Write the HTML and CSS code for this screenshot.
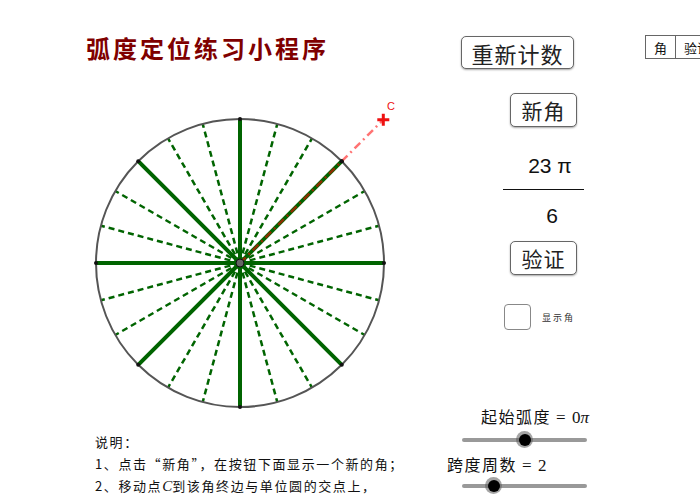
FILE: index.html
```html
<!DOCTYPE html>
<html lang="zh-CN">
  <head>
    <meta charset="UTF-8" />
    <title>弧度定位练习小程序</title>
    <link rel="stylesheet" href="styles.css">
  </head>
  <body>
    <div class="app">
      <!-- left: title, unit circle, notes -->
      <div class="left">
        <h1 class="title">弧度定位练习小程序</h1>

        <svg class="board" width="330" height="350" viewBox="0 0 330 350">
          <g id="spokes"></g>
          <circle cx="160" cy="199" r="144" fill="none" stroke="#555" stroke-width="2" />
          <g id="dots"></g>
          <line x1="160" y1="199" x2="303.3" y2="55.7" stroke="#ff0000" stroke-opacity="0.55" stroke-width="2.5" stroke-dasharray="8 4 2 4" />
          <circle cx="261.8" cy="97.2" r="2" fill="#111" />
          <circle cx="160" cy="199" r="4" fill="#666" stroke="#111" stroke-width="1" />
          <path d="M297.3 55.7 H309.3 M303.3 49.7 V61.7" stroke="#ee1111" stroke-width="3" />
          <text x="307" y="46" class="label-c">C</text>
        </svg>

        <div class="notes">
          <p>说明：</p>
          <p>1、点击“新角”，在按钮下面显示一个新的角；</p>
          <p>2、移动点<i class="math">C</i>到该角终边与单位圆的交点上，</p>
        </div>
      </div>

      <!-- middle: controls -->
      <div class="mid">
        <button class="btn btn-reset">重新计数</button>
        <button class="btn btn-new">新角</button>

        <div class="frac">
          <div class="num">23 π</div>
          <div class="den">6</div>
        </div>

        <button class="btn btn-check">验证</button>

        <label class="show">
          <span class="box"></span>
          <span class="show-text">显示角</span>
        </label>

        <div class="slider-label first">起始弧度 <span class="eq">= 0<i>π</i></span></div>
        <div class="slider">
          <div class="track"></div>
          <div class="thumb" style="left: 62px"><span></span></div>
        </div>

        <div class="slider-label second">跨度周数 <span class="eq">= 2</span></div>
        <div class="slider">
          <div class="track"></div>
          <div class="thumb" style="left: 31px"><span></span></div>
        </div>
      </div>

      <!-- right: score table, cut by the window -->
      <table class="score">
        <tr>
          <td>角</td>
          <td>验证</td>
        </tr>
      </table>
    </div>

    <script>
      // spokes every 15 degrees, solid on multiples of 45
      const spokes = document.getElementById("spokes");
      const dots = document.getElementById("dots");
      const cx = 160;
      const cy = 199;
      const r = 144;
      const ns = "http://www.w3.org/2000/svg";

      for (let k = 0; k < 24; k++) {
        const a = (k * 15 * Math.PI) / 180;
        const x = cx + r * Math.cos(a);
        const y = cy - r * Math.sin(a);
        const line = document.createElementNS(ns, "line");
        line.setAttribute("x1", cx);
        line.setAttribute("y1", cy);
        line.setAttribute("x2", x.toFixed(1));
        line.setAttribute("y2", y.toFixed(1));
        line.setAttribute("stroke", "#006400");
        if (k % 3 === 0) {
          line.setAttribute("stroke-width", "4");
          const dot = document.createElementNS(ns, "circle");
          dot.setAttribute("cx", x.toFixed(1));
          dot.setAttribute("cy", y.toFixed(1));
          dot.setAttribute("r", "2");
          dot.setAttribute("fill", "#111");
          dots.appendChild(dot);
        } else {
          line.setAttribute("stroke-width", "2.5");
          line.setAttribute("stroke-dasharray", "6 4");
        }
        spokes.appendChild(line);
      }
    </script>
  </body>
</html>
```

FILE: styles.css
```css
/* Resets */
body {
  margin: 0;
  font-family: "Noto Sans CJK SC", "Liberation Sans", sans-serif;
  color: #111;
  background: #fff;
}
p,
h1 {
  margin: 0;
}

/* Page */
.app {
  display: flex;
  width: 700px;
  height: 500px;
  overflow: hidden;
}

/* Left column */
.left {
  width: 440px;
  flex: none;
}
.title {
  margin: 32px 0 0 86px;
  line-height: 32px;
  font-size: 24px;
  font-weight: 700;
  letter-spacing: 3px;
  color: #7f0000;
}
.board {
  display: block;
  margin-left: 80px;
}
.label-c {
  font-family: "Liberation Sans", sans-serif;
  font-size: 11px;
  fill: #ee1111;
}
.notes {
  margin: 17px 0 0 95px;
  font-size: 13px;
  line-height: 22px;
  letter-spacing: 1.6px;
  white-space: nowrap;
}
.math {
  font-family: "Liberation Serif", serif;
  font-size: 15px;
  letter-spacing: 0;
}

/* Middle column */
.mid {
  width: 205px;
  flex: none;
  display: flex;
  flex-direction: column;
  align-items: flex-start;
}
.btn {
  box-sizing: border-box;
  padding: 0;
  background: #fff;
  border: 1.5px solid #666;
  border-radius: 5px;
  box-shadow: 0 1px 2px rgba(0, 0, 0, 0.35);
  font-family: "Noto Sans CJK SC", sans-serif;
  color: #222;
  line-height: 1;
}
.btn-reset {
  margin: 36px 0 0 21px;
  width: 113px;
  height: 33px;
  font-size: 22px;
  letter-spacing: 1px;
}
.btn-new,
.btn-check {
  margin-left: 70px;
  width: 67px;
  height: 34px;
  font-size: 21px;
  letter-spacing: 1px;
}
.btn-new {
  margin-top: 24px;
}
.btn-check {
  margin-top: 9px;
}

/* Fraction */
.frac {
  margin: 23px 0 0 63px;
  width: 81px;
  font-family: "Liberation Sans", sans-serif;
  font-size: 21px;
  text-align: center;
}
.num {
  line-height: 32px;
  padding: 0 0 7px 13px;
  border-bottom: 1.5px solid #111;
}
.den {
  margin-top: 10px;
  line-height: 32px;
  padding-left: 17px;
}

/* Checkbox */
.show {
  margin: 29px 0 0 64px;
  display: flex;
  align-items: center;
  gap: 11px;
}
.box {
  box-sizing: border-box;
  width: 27px;
  height: 26px;
  border: 1.5px solid #888;
  border-radius: 4px;
}
.show-text {
  font-size: 9px;
  letter-spacing: 2px;
  color: #333;
  margin-top: 1px;
}

/* Sliders */
.slider-label {
  line-height: 22px;
  font-size: 16px;
  letter-spacing: 1.5px;
  white-space: nowrap;
}
.slider-label.first {
  margin: 75px 0 0 41px;
}
.slider-label.second {
  margin: 4px 0 0 7px;
}
.eq {
  font-family: "Liberation Serif", serif;
  font-size: 17px;
  letter-spacing: 0;
  word-spacing: 2px;
}
.slider {
  position: relative;
  margin-left: 22px;
  width: 125px;
  height: 18px;
}
.slider-label.first + .slider {
  margin-top: 2px;
}
.track {
  height: 4px;
  margin-top: 7px;
  border-radius: 2px;
  background: #999;
}
.thumb {
  position: absolute;
  top: 0;
  width: 17px;
  height: 17px;
  margin-left: -8px;
  border-radius: 50%;
  background: rgba(90, 90, 90, 0.55);
  display: flex;
  align-items: center;
  justify-content: center;
}
.thumb span {
  width: 12px;
  height: 12px;
  border-radius: 50%;
  background: #000;
}

/* Score table */
.score {
  flex: none;
  align-self: flex-start;
  margin-top: 35px;
  border-collapse: collapse;
  font-size: 13px;
}
.score td {
  border: 1px solid #666;
  height: 22px;
  padding: 0 8px;
  line-height: 1;
  white-space: nowrap;
}
```
